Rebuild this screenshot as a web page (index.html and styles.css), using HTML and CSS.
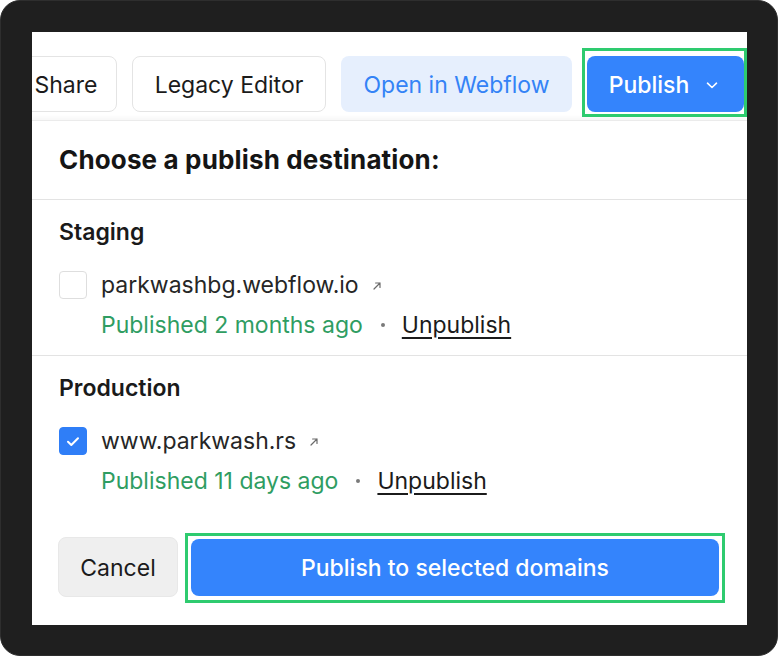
FILE: index.html
```html
<!DOCTYPE html>
<html lang="en">
<head>
<meta charset="utf-8">
<title>Publish</title>
<link rel="stylesheet" href="styles.css">
</head>
<body>
<div class="frame">
  <div class="screen">
    <div class="toolbar">
      <button class="btn btn-outline btn-share">Share</button>
      <button class="btn btn-outline btn-legacy">Legacy Editor</button>
      <button class="btn btn-soft">Open in Webflow</button>
      <button class="btn btn-primary btn-publish">
        <span>Publish</span>
        <svg class="chev" width="12" height="7" viewBox="0 0 12 7"><path d="M1.5 1.2L6 5.5 10.5 1.2" fill="none" stroke="#fff" stroke-width="1.6" stroke-linecap="round" stroke-linejoin="round"/></svg>
        <span class="hl hl-top"></span>
      </button>
    </div>
    <div class="panel">
      <div class="panel-head">Choose a publish destination:</div>
      <div class="section">
        <div class="section-title">Staging</div>
        <div class="row">
          <span class="check"></span>
          <span class="domain">parkwashbg.webflow.io</span>
          <svg class="ext" width="10" height="10" viewBox="0 0 10 10"><path d="M2 8L8 2M3.6 2H8V6.4" fill="none" stroke="#6b6b6b" stroke-width="1.2" stroke-linecap="round" stroke-linejoin="round"/></svg>
        </div>
        <div class="status">
          <span class="pub">Published 2 months ago</span>
          <span class="dot"></span>
          <span class="unpub">Unpublish</span>
        </div>
      </div>
      <div class="section section-last">
        <div class="section-title">Production</div>
        <div class="row">
          <span class="check checked">
            <svg width="14" height="11" viewBox="0 0 14 11"><path d="M2 5.8L5.3 9 12 2.2" fill="none" stroke="#fff" stroke-width="2" stroke-linecap="round" stroke-linejoin="round"/></svg>
          </span>
          <span class="domain">www.parkwash.rs</span>
          <svg class="ext" width="10" height="10" viewBox="0 0 10 10"><path d="M2 8L8 2M3.6 2H8V6.4" fill="none" stroke="#6b6b6b" stroke-width="1.2" stroke-linecap="round" stroke-linejoin="round"/></svg>
        </div>
        <div class="status">
          <span class="pub">Published 11 days ago</span>
          <span class="dot"></span>
          <span class="unpub">Unpublish</span>
        </div>
      </div>
      <div class="footer">
        <button class="btn btn-cancel">Cancel</button>
        <button class="btn btn-primary btn-go">Publish to selected domains<span class="hl hl-bottom"></span></button>
      </div>
    </div>
  </div>
</div>
</body>
</html>
```
FILE: styles.css
```css
* { box-sizing: border-box; }
html, body { margin: 0; padding: 0; background: #ffffff; }
body { font-family: Inter, "Noto Sans", "Liberation Sans", sans-serif; color: #1b1b1b; }

.frame {
  width: 778px;
  height: 656px;
  background: #1f1f1f;
  border: 1px solid #2e2e2e;
  border-radius: 20px;
  padding: 31px 30px 30px 31px;
}
.screen {
  width: 715px;
  height: 593px;
  background: #fff;
  overflow: hidden;
  display: flex;
  flex-direction: column;
}

.toolbar {
  display: flex;
  justify-content: flex-end;
  gap: 15px;
  padding: 24px 3px 0 0;
  flex-shrink: 0;
}
.btn {
  font-family: inherit;
  font-size: 23px;
  height: 56px;
  border-radius: 8px;
  flex-shrink: 0;
  display: flex;
  align-items: center;
  justify-content: center;
  padding: 2px 0 0;
  cursor: pointer;
  position: relative;
}
.btn-outline {
  background: #fff;
  border: 1px solid #e4e4e4;
  color: #1b1b1b;
}
.btn-share { width: 102px; }
.btn-legacy { width: 194px; }
.btn-soft {
  width: 231px;
  background: #e6effd;
  border: none;
  color: #3483f6;
}
.btn-primary {
  background: #3484fc;
  border: none;
  color: #fff;
  font-weight: 500;
}
.btn-publish {
  width: 157px;
  gap: 17px;
  padding-right: 4px;
}
.chev { margin-top: 0; }

.hl {
  position: absolute;
  border: 3px solid #2ecb6f;
  pointer-events: none;
}
.hl-top { top: -8px; left: -5px; right: -3px; bottom: -5px; }
.hl-bottom { top: -6px; left: -6px; right: -6px; bottom: -7px; }

.panel {
  margin-top: 8px;
  border-top: 1px solid #ebebeb;
  box-shadow: 0 -3px 4px rgba(0, 0, 0, 0.03);
  flex: 1;
  display: flex;
  flex-direction: column;
}
.panel-head {
  font-size: 26px;
  font-weight: 700;
  letter-spacing: 0.15px;
  line-height: 28px;
  padding: 25px 27px 25px;
  border-bottom: 1px solid #e3e3e3;
  color: #151515;
}
.section {
  padding: 19px 27px 16px;
  border-bottom: 1px solid #e3e3e3;
}
.section-last { border-bottom: none; }
.section-title {
  font-size: 23px;
  font-weight: 600;
  line-height: 26px;
  color: #1a1a1a;
}
.row {
  display: flex;
  align-items: center;
  height: 28px;
  margin-top: 26px;
}
.check {
  width: 28px;
  height: 28px;
  border: 1.5px solid #dedede;
  border-radius: 4px;
  background: #fff;
  display: flex;
  align-items: center;
  justify-content: center;
  flex-shrink: 0;
}
.check.checked {
  background: #2f7ef7;
  border-color: #2f7ef7;
}
.domain {
  margin-left: 14px;
  font-size: 23px;
  line-height: 28px;
  color: #262626;
}
.ext { margin-left: 13px; margin-top: 1px; }
.status {
  display: flex;
  align-items: center;
  height: 28px;
  margin-top: 12px;
  padding-left: 42px;
  font-size: 23px;
}
.pub { color: #2f9d62; }
.dot {
  width: 4px;
  height: 4px;
  border-radius: 50%;
  background: #7a7a7a;
  margin: 0 17px 0 18px;
}
.unpub {
  color: #1b1b1b;
  text-decoration: underline;
  text-underline-offset: 4px;
  text-decoration-thickness: 1.5px;
}
.footer {
  margin-top: auto;
  display: flex;
  align-items: center;
  gap: 13px;
  padding: 0 28px 28px 26px;
}
.btn-cancel {
  width: 120px;
  height: 60px;
  background: #efefef;
  border: 1px solid #e8e8e8;
  color: #1b1b1b;
  font-weight: 400;
}
.btn-go {
  flex: 1;
  height: 57px;
}
```
